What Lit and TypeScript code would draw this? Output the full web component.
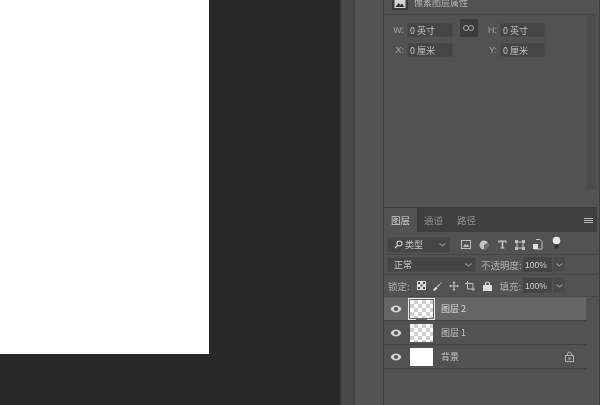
import { LitElement, html, css } from "lit";
import { customElement } from "lit/decorators.js";

const chevron = html`<svg class="chev" width="7" height="4" viewBox="0 0 7 4"><path d="M.5 .5l3 2.500 3-2.500" fill="none" stroke="#8d8d8d" stroke-width="1.100"/></svg>`;
const eye = html`<svg class="eye" width="12" height="8" viewBox="0 0 12 8"><path d="M0.500 4C2 1.400 4 .5 6 .5s4 .9 5.500 3.500C10 6.600 8 7.500 6 7.500S2 6.600.5 4z" fill="#d2d2d2"/><circle cx="6" cy="4" r="2" fill="#555"/></svg>`;

@customElement("app-root")
export class AppRoot extends LitElement {
  static styles = css`
    :host { display: block; width: 600px; height: 405px; overflow: hidden; font-family: "Noto Sans CJK SC", "Liberation Sans", sans-serif; font-size: 9px; color: #c4c4c4; }
    .app { display: flex; width: 600px; height: 405px; background: #282828; }
    .canvas { width: 340px; flex: none; }
    .page { width: 209px; height: 354px; background: #fff; }
    .strip1 { width: 14px; flex: none; box-sizing: border-box; background: #484848; border-left: 1px solid #3a3a3a; }
    .strip2 { width: 29px; flex: none; box-sizing: border-box; background: #535353; border-left: 1px solid #3f3f3f; }
    .dock { flex: 1; display: flex; flex-direction: column; background: #525252; padding-right: 2px; border-left: 1px solid #3d3d3d; border-right: 1px solid #3f3f3f; box-sizing: border-box; filter: blur(0.35px); min-width: 0; }
    .props { height: 208px; flex: none; display: flex; flex-direction: column; border-bottom: 1px solid #3c3c3c; box-sizing: border-box; }
    .ptitle { height: 15px; flex: none; box-sizing: border-box; display: flex; align-items: flex-start; gap: 6px; padding-left: 8px; border-bottom: 1px solid #464646; overflow: hidden; color: #b5b5b5; }
    .ptitle span { line-height: 1; margin-top: -2px; white-space: nowrap; }
    .picon { width: 16px; height: 10px; background: #3a3a3a; display: flex; align-items: flex-end; justify-content: center; flex: none; padding-bottom: 2px; box-sizing: border-box; overflow: hidden; }
    .pbody { flex: 1; display: flex; }
    .pcontent { flex: 1; padding: 8px 0 0 6px; display: grid; grid-template-columns: 17px 46px 31px 16px 45px; grid-template-rows: 14px 14px; row-gap: 6px; align-content: start; align-items: center; }
    .scroll { width: 11px; flex: none; background: #525252; }
    .scroll i { display: block; height: 175px; background: #4c4c4c; width: 9px; margin-left: 1px; }
    .lab { color: #a4a4a4; text-align: right; padding-right: 3px; font-family: "Liberation Sans", sans-serif; font-size: 9px; }
    .num { height: 14px; box-sizing: border-box; background: #454545; border: 1px solid #4b4b4b; color: #c4c4c4; padding-left: 2px; display: flex; align-items: center; font-size: 9px; line-height: 1; }
    .link { width: 18px; height: 18px; background: #3b3b3b; justify-self: center; grid-row: 1; grid-column: 3; display: flex; align-items: center; justify-content: center; margin-top: -4px; }
    .layers { flex: 1; display: flex; flex-direction: column; }
    .tabs { height: 24px; flex: none; box-sizing: border-box; background: #3f3f3f; display: flex; align-items: stretch; }
    .tab { width: 33px; display: flex; align-items: center; justify-content: center; color: #8f8f8f; font-size: 9.500px; }
    .tab.on { background: #535353; color: #d0d0d0; }
    .menu { margin-left: auto; width: 9px; margin-right: 4px; align-self: center; display: flex; flex-direction: column; gap: 1px; }
    .menu i { display: block; height: 1px; background: #b8b8b8; }
    .row { flex: none; display: flex; align-items: center; border-bottom: 1px solid #474747; box-sizing: border-box; padding-right: 32px; }
    .r1 { height: 23px; padding-left: 3px; padding-top: 3px; }
    .r2 { height: 20px; padding-left: 3px; }
    .r3 { height: 22px; padding-left: 4px; }
    .sel { box-sizing: border-box; height: 16px; background: #454545; display: flex; align-items: center; padding: 0 3px 0 6px; justify-content: space-between; border: 1px solid #4b4b4b; color: #c8c8c8; }
    .ficons { display: flex; align-items: center; margin-left: 7px; }
    .ficons span { width: 18px; display: flex; justify-content: center; }
    .ficons svg { display: block; }
    .blab { margin-left: 5px; color: #b0b0b0; font-size: 9.500px; white-space: nowrap; }
    .pct { width: 29px; height: 15px; margin-left: auto; flex: none; box-sizing: border-box; background: #454545; display: flex; align-items: center; padding-left: 2px; font-family: "Liberation Sans", sans-serif; font-size: 8.500px; color: #d0d0d0; }
    .drop { width: 12px; height: 15px; flex: none; background: #484848; margin-left: 1px; border: 1px solid #4d4d4d; box-sizing: border-box; display: flex; align-items: center; justify-content: center; }
    .lockl { color: #b0b0b0; width: 21px; flex: none; white-space: nowrap; font-size: 9.500px; }
    .licons { display: flex; align-items: center; margin-left: 4px; }
    .licons span { width: 16.500px; display: flex; justify-content: center; }
    .fill { color: #b0b0b0; margin-left: 4px; white-space: nowrap; font-size: 9.500px; }
    .list { display: flex; flex-direction: column; width: 202px; }
    .layer { height: 24px; display: flex; align-items: center; box-sizing: border-box; border-bottom: 1px solid #404040; background: #525252; color: #c8c8c8; padding-left: 6px; }
    .layer.cur { background: #666; color: #dcdcdc; }
    .eye { flex: none; display: block; }
    .thumb { width: 23px; height: 18px; margin-left: 8px; flex: none; background-color: #fff; background-image: conic-gradient(#d0d0d0 25%, #fff 0 50%, #d0d0d0 0 75%, #fff 0); background-size: 8px 8px; position: relative; }
    .thumb.white { background-image: none; }
    .thumb.cur::after { content: ""; position: absolute; inset: -2px; background:
        linear-gradient(#e8e8e8, #e8e8e8) top / 100% 1px no-repeat,
        linear-gradient(#e8e8e8, #e8e8e8) left / 1px 100% no-repeat,
        linear-gradient(#e8e8e8, #e8e8e8) right / 1px 100% no-repeat,
        linear-gradient(#e8e8e8, #e8e8e8) left bottom / 8px 1px no-repeat,
        linear-gradient(#e8e8e8, #e8e8e8) right bottom / 8px 1px no-repeat; }
    .lname { margin-left: 8px; font-size: 9px; }
    .lock { margin-left: auto; margin-right: 12px; display: block; }
  `;

  render() {
    return html`<div class="app">
      <div class="canvas"><div class="page"></div></div>
      <div class="strip1"></div>
      <div class="strip2"></div>
      <div class="dock">
        <div class="props">
          <div class="ptitle">
            <div class="picon"><svg width="12" height="10" viewBox="0 0 11 10"><rect width="11" height="10" fill="#d4d4d4"/><path d="M1 9l3-4 2 2 1.500-1.500L10 9z" fill="#333"/></svg></div>
            <span>像素图层属性</span>
          </div>
          <div class="pbody">
            <div class="pcontent">
              <div class="lab">W:</div><div class="num">0 英寸</div>
              <div class="link"><svg width="11" height="6" viewBox="0 0 11 6"><g fill="none" stroke="#a8a8a8" stroke-width="1"><rect x=".5" y=".5" width="5" height="5" rx="2.500"/><rect x="5.500" y=".5" width="5" height="5" rx="2.500"/></g></svg></div>
              <div class="lab">H:</div><div class="num">0 英寸</div>
              <div class="lab">X:</div><div class="num">0 厘米</div><div></div>
              <div class="lab">Y:</div><div class="num">0 厘米</div>
            </div>
            <div class="scroll"><i></i></div>
          </div>
        </div>
        <div class="layers">
          <div class="tabs">
            <div class="tab on">图层</div><div class="tab">通道</div><div class="tab">路径</div>
            <div class="menu"><i></i><i></i><i></i></div>
          </div>
          <div class="row r1">
            <div class="sel" style="width:65px">
              <span><svg width="9" height="9" viewBox="0 0 9 9" style="vertical-align:-1px"><circle cx="5.500" cy="3.500" r="2.500" fill="none" stroke="#d0d0d0" stroke-width="1.100"/><path d="M3.500 5.500L1 8" stroke="#d0d0d0" stroke-width="1.300"/></svg> 类型</span>${chevron}
            </div>
            <div class="ficons">
              <span><svg width="10" height="9" viewBox="0 0 10 9"><rect x=".5" y=".5" width="9" height="8" fill="none" stroke="#c0c0c0"/><path d="M2 7l2-3 1.500 1.500L7 4l1 3z" fill="#c0c0c0"/></svg></span>
              <span><svg width="10" height="10" viewBox="0 0 10 10"><circle cx="5" cy="5" r="4.500" fill="#c4c4c4"/><path d="M5 5L9 2.500A4.500 4.500 0 0 1 5 9.500z" fill="#6a6a6a"/></svg></span>
              <span><svg width="9" height="9" viewBox="0 0 9 9"><path d="M.5 .5h8v2.500H7.500V1.800H5.300V7.500h1.200V8.500h-4V7.500h1.200V1.800H1.500V3H.5z" fill="#c8c8c8"/></svg></span>
              <span><svg width="10" height="10" viewBox="0 0 10 10"><path d="M2 2h6v6H2z" fill="none" stroke="#c0c0c0"/><path d="M0 0h3v3H0zM7 0h3v3H7zM0 7h3v3H0zM7 7h3v3H7z" fill="#c0c0c0"/></svg></span>
              <span><svg width="10" height="11" viewBox="0 0 10 11"><path d="M3 .5h4l2 2V10H1V5" fill="none" stroke="#c0c0c0"/><rect x="0" y="5" width="5" height="5" fill="#e0e0e0"/></svg></span>
              <span><svg width="9" height="14" viewBox="0 0 9 14" style="margin-top:-4px"><circle cx="4.500" cy="4.500" r="3.800" fill="#e8e8e8"/><rect x="2.500" y="8.500" width="4" height="4" fill="#333"/></svg></span>
            </div>
          </div>
          <div class="row r2">
            <div class="sel" style="width:89px;height:15px">
              <span>正常</span>${chevron}
            </div>
            <span class="blab">不透明度:</span>
            <div class="pct">100%</div><div class="drop">${chevron}</div>
          </div>
          <div class="row r3">
            <span class="lockl">锁定:</span>
            <div class="licons">
              <span><svg width="9" height="9" viewBox="0 0 9 9"><rect width="9" height="9" fill="#ddd"/><path d="M1 1h2v2H1zM6 1h2v2H6zM3.500 3.500h2v2h-2zM1 6h2v2H1zM6 6h2v2H6z" fill="#444"/></svg></span>
              <span><svg width="10" height="10" viewBox="0 0 10 10"><path d="M9.500 .5L4 5l1 1zM3.500 5.500L1 7.500 0 10l3-1 1.500-2z" fill="#d8d8d8"/></svg></span>
              <span><svg width="10" height="10" viewBox="0 0 10 10"><path d="M5 0l1.500 2H5.500v2.500H8V3.500l2 1.500-2 1.500v-1H5.500V8h1L5 10 3.500 8h1V5.500H2v1L0 5l2-1.500v1h2.500V2h-1z" fill="#c8c8c8"/></svg></span>
              <span><svg width="11" height="10" viewBox="0 0 11 10"><path d="M2.500 0v8H10M0 2.500h8V10" fill="none" stroke="#c0c0c0"/></svg></span>
              <span><svg width="9" height="10" viewBox="0 0 9 10"><path d="M2.500 4.500V3a2 2 0 0 1 4 0v1.500" fill="none" stroke="#ddd" stroke-width="1.200"/><rect y="4" width="9" height="6" fill="#ddd"/></svg></span>
            </div>
            <span class="fill">填充:</span>
            <div class="pct">100%</div><div class="drop">${chevron}</div>
          </div>
          <div class="list">
            <div class="layer cur">${eye}<div class="thumb cur"></div><span class="lname">图层 2</span></div>
            <div class="layer">${eye}<div class="thumb"></div><span class="lname">图层 1</span></div>
            <div class="layer">${eye}<div class="thumb white"></div><span class="lname">背景</span>
              <svg class="lock" width="9" height="11" viewBox="0 0 9 11"><path d="M2.500 5V3a2 2 0 0 1 4 0v2" fill="none" stroke="#b0b0b0"/><rect x=".5" y="4.500" width="8" height="6" fill="none" stroke="#b0b0b0"/><rect x="3.500" y="6.500" width="2" height="2" fill="#b0b0b0"/></svg>
            </div>
          </div>
        </div>
      </div>
    </div>`;
  }
}
